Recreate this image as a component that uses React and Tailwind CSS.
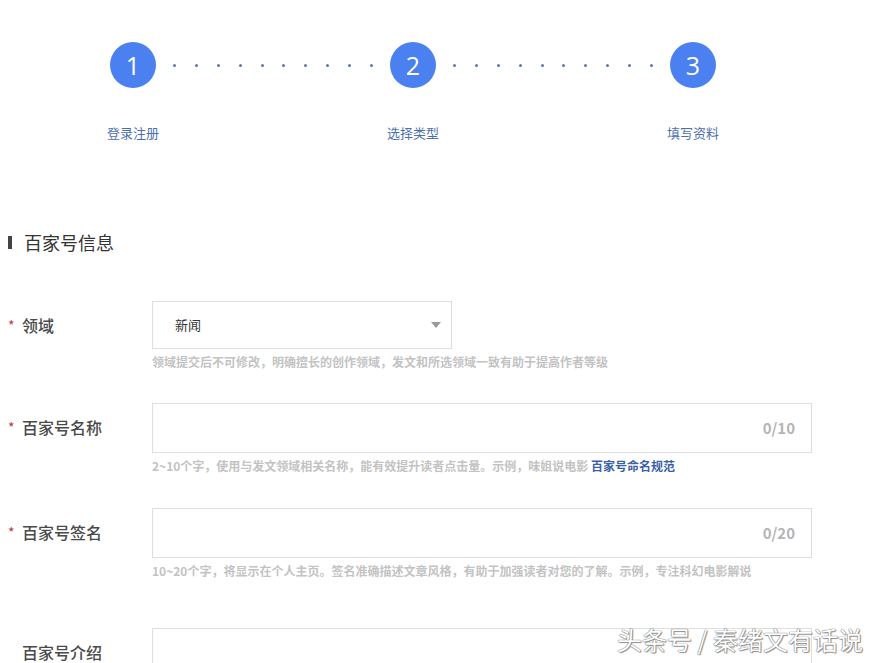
import React from "react";

const font = { fontFamily: '"Microsoft YaHei","Noto Sans CJK SC","Noto Sans",sans-serif' };

function Step({ n, label }) {
  return (
    <div className="flex flex-col items-center w-[46px]">
      <div className="w-[46px] h-[46px] rounded-full bg-[#4b80f0] flex items-center justify-center text-white text-[25px] leading-none" style={{ fontFamily: '"Open Sans","Noto Sans",sans-serif' }}>
        {n}
      </div>
      <div className="mt-[36px] text-[13px] leading-[18px] text-[#4d6fae] whitespace-nowrap">{label}</div>
    </div>
  );
}

function Dots() {
  return (
    <div className="flex items-center justify-between w-[200px] h-[46px] mx-[17px]">
      {Array.from({ length: 10 }).map((_, i) => (
        <span key={i} className="w-[3px] h-[3px] rounded-full bg-[#5d77a8]" />
      ))}
    </div>
  );
}

function Label({ required, children }) {
  return (
    <div className="w-[152px] shrink-0 flex items-center h-[48px] pl-[8px]">
      <span className={"w-[14px] text-[14px] text-[#c0343b] " + (required ? "" : "invisible")}>*</span>
      <span className="text-[16px] font-medium text-[#4a4a4a]">{children}</span>
    </div>
  );
}

function Help({ children }) {
  return <div className="mt-[5px] text-[12px] leading-[16px] font-bold text-[#c3c3c3] whitespace-nowrap">{children}</div>;
}

export default function App() {
  return (
    <div className="w-[880px] h-[663px] bg-white overflow-hidden relative" style={font}>
      <div className="flex items-start pl-[110px] pt-[42px]">
        <Step n="1" label="登录注册" />
        <Dots />
        <Step n="2" label="选择类型" />
        <Dots />
        <Step n="3" label="填写资料" />
      </div>

      <div className="flex items-center mt-[88px] pl-[8px]">
        <span className="w-[4px] h-[13px] bg-[#444]" />
        <span className="ml-[12px] text-[18px] text-[#333] leading-[24px]">百家号信息</span>
      </div>

      <div className="flex mt-[47px]">
        <Label required>领域</Label>
        <div className="flex flex-col">
          <div className="w-[300px] h-[48px] border border-[#dedede] flex items-center justify-between pl-[22px] pr-[10px]">
            <span className="text-[13px] text-[#333]">新闻</span>
            <span className="w-0 h-0 border-l-[5px] border-r-[5px] border-t-[6px] border-l-transparent border-r-transparent border-t-[#9a9a9a]" />
          </div>
          <Help>领域提交后不可修改，明确擅长的创作领域，发文和所选领域一致有助于提高作者等级</Help>
        </div>
      </div>

      <div className="flex mt-[33px]">
        <Label required>百家号名称</Label>
        <div className="flex flex-col">
          <div className="w-[660px] h-[50px] border border-[#dedede] flex items-center justify-end pr-[16px]">
            <span className="text-[15px] font-bold text-[#b5b5b5]">0/10</span>
          </div>
          <Help>
            2~10个字，使用与发文领域相关名称，能有效提升读者点击量。示例，味姐说电影 <span className="text-[#3a5fa6]">百家号命名规范</span>
          </Help>
        </div>
      </div>

      <div className="flex mt-[34px]">
        <Label required>百家号签名</Label>
        <div className="flex flex-col">
          <div className="w-[660px] h-[50px] border border-[#dedede] flex items-center justify-end pr-[16px]">
            <span className="text-[15px] font-bold text-[#b5b5b5]">0/20</span>
          </div>
          <Help>10~20个字，将显示在个人主页。签名准确描述文章风格，有助于加强读者对您的了解。示例，专注科幻电影解说</Help>
        </div>
      </div>

      <div className="flex mt-[49px]">
        <Label>百家号介绍</Label>
        <div className="w-[660px] h-[80px] border border-[#dedede]" />
      </div>

      <div
        className="absolute left-[617px] top-[622px] text-[25px] leading-[34px] text-white whitespace-nowrap"
        style={{ textShadow: "0 0 1px #666, 0 0 1px #666, 1px 1px 1px #999" }}
      >
        头条号 / 秦绪文有话说
      </div>
    </div>
  );
}
